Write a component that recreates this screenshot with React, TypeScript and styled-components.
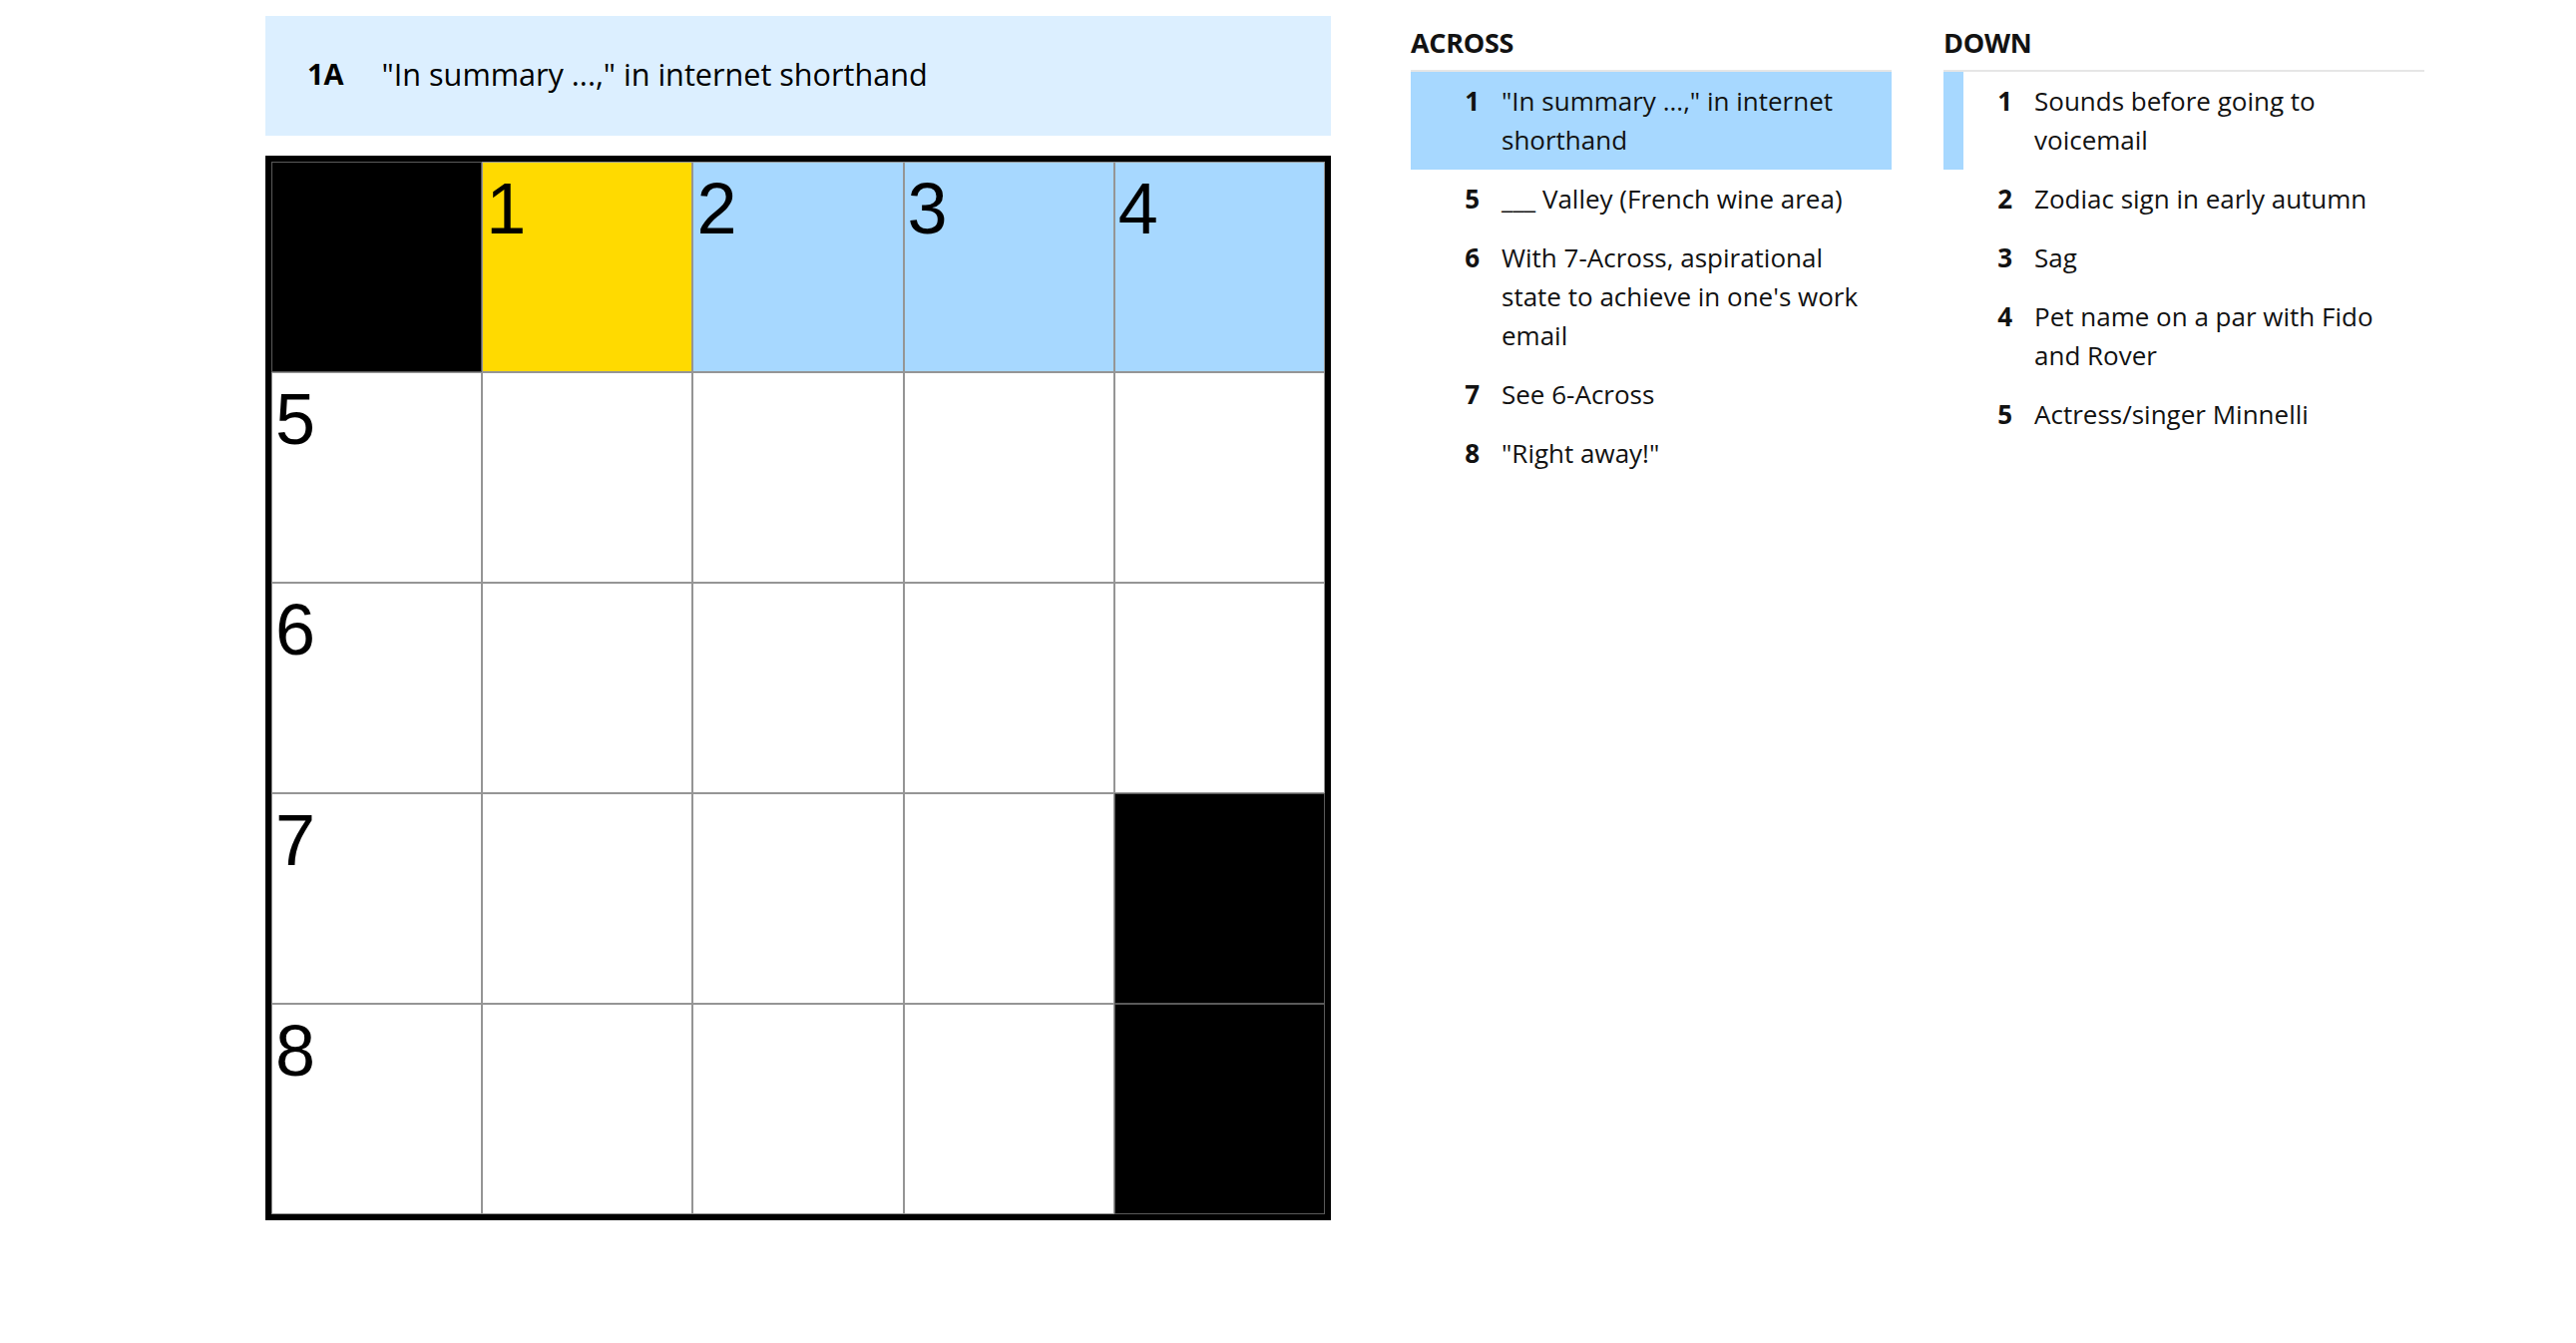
import * as React from 'react';
import styled, { createGlobalStyle } from 'styled-components';

const GlobalStyle = createGlobalStyle`
  html, body {
    margin: 0;
    padding: 0;
    background: #ffffff;
  }
  body {
    font-family: 'Open Sans', 'Noto Sans', sans-serif;
    color: #121212;
  }
`;

type Fill = 'block' | 'focus' | 'word' | 'open';

interface CellData {
  fill: Fill;
  label?: number;
}

interface Clue {
  num: number;
  text: string;
}

const board: CellData[][] = [
  [{ fill: 'block' }, { fill: 'focus', label: 1 }, { fill: 'word', label: 2 }, { fill: 'word', label: 3 }, { fill: 'word', label: 4 }],
  [{ fill: 'open', label: 5 }, { fill: 'open' }, { fill: 'open' }, { fill: 'open' }, { fill: 'open' }],
  [{ fill: 'open', label: 6 }, { fill: 'open' }, { fill: 'open' }, { fill: 'open' }, { fill: 'open' }],
  [{ fill: 'open', label: 7 }, { fill: 'open' }, { fill: 'open' }, { fill: 'open' }, { fill: 'block' }],
  [{ fill: 'open', label: 8 }, { fill: 'open' }, { fill: 'open' }, { fill: 'open' }, { fill: 'block' }],
];

const across: Clue[] = [
  { num: 1, text: '"In summary ...," in internet shorthand' },
  { num: 5, text: '___ Valley (French wine area)' },
  { num: 6, text: "With 7-Across, aspirational state to achieve in one's work email" },
  { num: 7, text: 'See 6-Across' },
  { num: 8, text: '"Right away!"' },
];

const down: Clue[] = [
  { num: 1, text: 'Sounds before going to voicemail' },
  { num: 2, text: 'Zodiac sign in early autumn' },
  { num: 3, text: 'Sag' },
  { num: 4, text: 'Pet name on a par with Fido and Rover' },
  { num: 5, text: 'Actress/singer Minnelli' },
];

const fillColors: Record<Fill, string> = {
  block: '#000000',
  focus: '#ffda00',
  word: '#a7d8ff',
  open: '#ffffff',
};

const Page = styled('div')`
  display: flex;
  align-items: flex-start;
  gap: 80px;
  padding: 16px 0 0 266px;
`;

const Board = styled('div')`
  display: flex;
  flex-direction: column;
  gap: 20px;
  width: 1068px;
`;

const ClueBar = styled('div')`
  display: flex;
  align-items: center;
  box-sizing: border-box;
  height: 120px;
  padding: 0 0 5px 42px;
  background-color: #dcefff;
  font-size: 30.6px;
  color: #000000;
`;

const ClueBarLabel = styled('span')`
  font-weight: 700;
  font-size: 29px;
  margin-right: 38px;
`;

const Grid = styled('div')`
  display: grid;
  grid-template-columns: repeat(5, 1fr);
  grid-template-rows: repeat(5, 1fr);
  box-sizing: border-box;
  width: 1068px;
  height: 1067px;
  border: 6px solid #000000;
`;

const Cell = styled('div')<{ $fill: Fill }>`
  box-sizing: border-box;
  border: 1px solid ${({ $fill }) => ($fill === 'block' ? '#5a5a5a' : '#959595')};
  background-color: ${({ $fill }) => fillColors[$fill]};
  padding: 10px 0 0 3px;
`;

const CellLabel = styled('span')`
  display: block;
  font-family: 'Liberation Sans', Arial, sans-serif;
  font-size: 72px;
  line-height: 1;
  color: #000000;
`;

const ClueLists = styled('div')`
  display: flex;
  gap: 52px;
`;

const ClueColumn = styled('section')`
  width: 482px;
`;

const ColumnTitle = styled('h3')`
  margin: 0;
  padding: 11px 0 12px 0;
  font-size: 27px;
  line-height: 31px;
  font-weight: 700;
  letter-spacing: -0.3px;
  border-bottom: 2px solid #e6e6e6;
`;

const ClueList = styled('ol')`
  list-style: none;
  margin: 0;
  padding: 0;
`;

const ClueItem = styled('li')<{ $mode?: 'selected' | 'crossing' }>`
  display: flex;
  padding: 10px 26px 10px 0;
  font-size: 26px;
  line-height: 39px;
  background-color: ${({ $mode }) => ($mode === 'selected' ? '#a7d8ff' : 'transparent')};
  box-shadow: ${({ $mode }) => ($mode === 'crossing' ? 'inset 20px 0 0 #a7d8ff' : 'none')};
`;

const ClueNum = styled('span')`
  flex: 0 0 69px;
  text-align: right;
  font-weight: 700;
  margin-right: 22px;
`;

const ClueText = styled('span')`
  flex: 1;
`;

const ClueSection = ({ title, clues, mode }: { title: string; clues: Clue[]; mode: 'selected' | 'crossing' }) => (
  <ClueColumn>
    <ColumnTitle>{title}</ColumnTitle>
    <ClueList>
      {clues.map((c, i) => (
        <ClueItem key={c.num} $mode={i === 0 ? mode : undefined}>
          <ClueNum>{c.num}</ClueNum>
          <ClueText>{c.text}</ClueText>
        </ClueItem>
      ))}
    </ClueList>
  </ClueColumn>
);

export default function App() {
  return (
    <>
      <GlobalStyle />
      <Page>
        <Board>
          <ClueBar>
            <ClueBarLabel>1A</ClueBarLabel>
            <span>"In summary ...," in internet shorthand</span>
          </ClueBar>
          <Grid>
            {board.flatMap((row, r) =>
              row.map((cell, c) => (
                <Cell key={`${r}-${c}`} $fill={cell.fill}>
                  {cell.label !== undefined && <CellLabel>{cell.label}</CellLabel>}
                </Cell>
              ))
            )}
          </Grid>
        </Board>
        <ClueLists>
          <ClueSection title="ACROSS" clues={across} mode="selected" />
          <ClueSection title="DOWN" clues={down} mode="crossing" />
        </ClueLists>
      </Page>
    </>
  );
}
